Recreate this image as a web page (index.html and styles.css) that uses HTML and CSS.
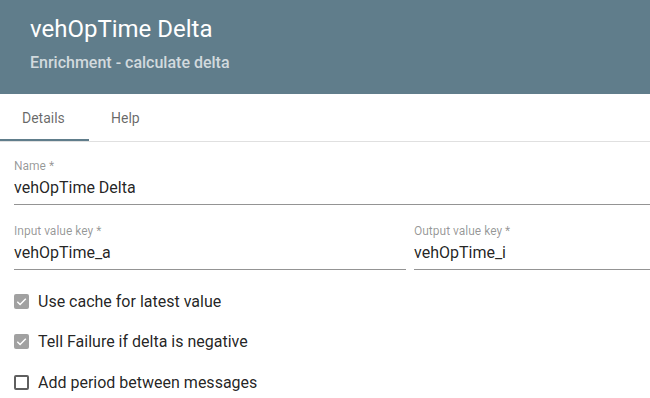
FILE: index.html
```html
<!DOCTYPE html>
<html>
<head>
<meta charset="utf-8">
<link rel="stylesheet" href="styles.css">
</head>
<body>
<header class="header">
  <h1 class="title">vehOpTime Delta</h1>
  <div class="subtitle">Enrichment - calculate delta</div>
</header>
<nav class="tabs">
  <div class="tab active">Details</div>
  <div class="tab">Help</div>
</nav>
<main class="form">
  <div class="field">
    <label class="label">Name *</label>
    <div class="value">vehOpTime Delta</div>
  </div>
  <div class="row">
    <div class="field">
      <label class="label">Input value key *</label>
      <div class="value">vehOpTime_a</div>
    </div>
    <div class="field">
      <label class="label">Output value key *</label>
      <div class="value">vehOpTime_i</div>
    </div>
  </div>
  <div class="checks">
    <div class="check">
      <span class="box checked"><svg viewBox="0 0 15 15" width="15" height="15"><path d="M3.3 7.8 L6.1 10.6 L11.8 4.8" fill="none" stroke="#fff" stroke-width="1.4"/></svg></span>
      <span class="check-label">Use cache for latest value</span>
    </div>
    <div class="check">
      <span class="box checked"><svg viewBox="0 0 15 15" width="15" height="15"><path d="M3.3 7.8 L6.1 10.6 L11.8 4.8" fill="none" stroke="#fff" stroke-width="1.4"/></svg></span>
      <span class="check-label">Tell Failure if delta is negative</span>
    </div>
    <div class="check">
      <span class="box"></span>
      <span class="check-label">Add period between messages</span>
    </div>
  </div>
</main>
</body>
</html>
```
FILE: styles.css
```css
* { box-sizing: border-box; }
html, body { margin: 0; padding: 0; }
body {
  font-family: Roboto, "Noto Sans", sans-serif;
  background: #fff;
  color: rgba(0,0,0,0.87);
  width: 650px;
  overflow: hidden;
}
.header {
  background: #607d8b;
  height: 94px;
  padding: 14px 30px 0;
}
.title {
  margin: 0;
  font-size: 24px;
  font-weight: 400;
  color: #fff;
  line-height: 30px;
}
.subtitle {
  margin-top: 7px;
  font-size: 16px;
  font-weight: 500;
  line-height: 24px;
  color: rgba(255,255,255,0.72);
}
.tabs {
  display: flex;
  height: 48px;
  border-bottom: 1px solid #e0e0e0;
}
.tab {
  padding: 1px 23px 0 22px;
  font-size: 14px;
  line-height: 46px;
  color: rgba(0,0,0,0.6);
}
.tab.active {
  border-bottom: 2px solid #607d8b;
  width: 89px;
}
.form {
  padding: 17px 0 0 14px;
}
.field {
  border-bottom: 1px solid #949494;
  padding-bottom: 6px;
}
.label {
  display: block;
  font-size: 12px;
  line-height: 14px;
  color: rgba(0,0,0,0.42);
}
.value {
  font-size: 16px;
  line-height: 20px;
  margin-top: 5px;
}
.row {
  display: grid;
  grid-template-columns: 392px 1fr;
  column-gap: 8px;
  margin-top: 19px;
}
.checks {
  display: flex;
  flex-direction: column;
  gap: 20.5px;
  margin-top: 21px;
}
.check {
  display: flex;
  align-items: center;
  height: 20px;
}
.box {
  width: 15px;
  height: 15px;
  border: 2px solid #5f5f5f;
  border-radius: 2px;
  margin-right: 9px;
  display: flex;
  align-items: center;
  justify-content: center;
}
.box.checked {
  border: none;
  background: #a1a1a1;
}
.check-label {
  font-size: 16px;
  color: rgba(0,0,0,0.87);
}
```
